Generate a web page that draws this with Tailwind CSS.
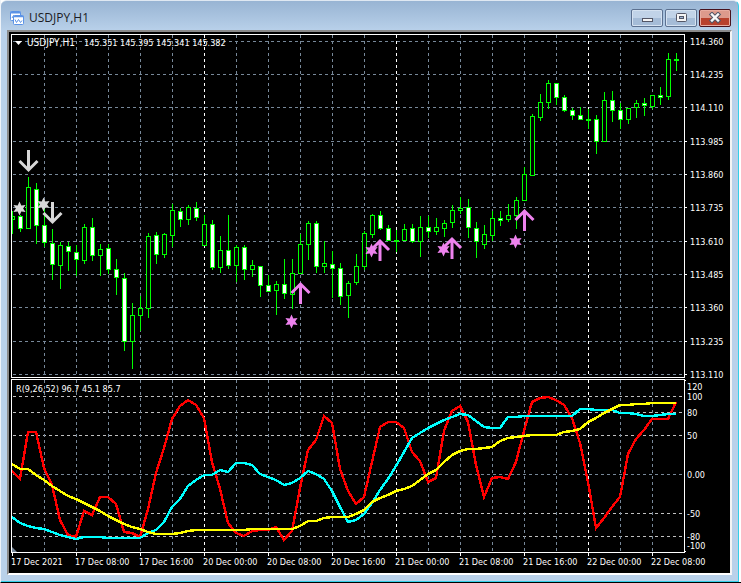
<!DOCTYPE html>
<html lang="en">
<head>
<meta charset="utf-8">
<title>USDJPY,H1</title>
<script src="https://cdn.jsdelivr.net/npm/@tailwindcss/browser@4"></script>
</head>
<body class="bg-white font-['Open_Sans',sans-serif]">
<div class="w-full border-l border-l-[#eef3f9] border-b border-b-black pr-[2px]">
  <main class="rounded-t-md border-t border-t-[#dfe8f2] border-r border-r-[#35cfe8] border-b border-b-[#35cfe8] bg-[#b9d1ea] bg-linear-to-b from-[#98b4d3] to-[#b9d1ea] to-[30px] px-[6px] pb-[6px]">
    <header class="flex h-[29px] items-center gap-1 pl-[3px] pr-px pt-[5px]">
      <svg class="size-[14px] shrink-0" viewBox="0 0 14 14" aria-hidden="true">
        <rect x="0.5" y="0.5" width="10" height="9" rx="1" fill="#fff" stroke="#5b93e6"/>
        <path d="M0.5 1.500h10" stroke="#5b93e6" stroke-width="2"/>
        <path d="M2 7l1.500-2.500L5 6" fill="none" stroke="#5b93e6"/>
        <rect x="3.500" y="4.500" width="10" height="9" rx="1" fill="#fff" stroke="#5b93e6"/>
        <path d="M3.500 5.500h10" stroke="#5b93e6" stroke-width="1.500"/>
        <path d="M5 8.500L6.500 11.500L8.500 8.500L10.500 11.500L12 9.500" fill="none" stroke="#5b93e6"/>
      </svg>
      <h1 class="ml-px flex-1 text-[12px] leading-4 text-[#1c1c24]">USDJPY,H1</h1>
      <div class="flex gap-[2px]">
        <button type="button" aria-label="Minimize" class="flex h-[18px] w-8 items-center justify-center rounded-[2px] border border-[#5c7190] bg-linear-to-b from-[#c1d3e8] from-50% to-[#a5bcd7] to-50% shadow-[inset_0_0_0_1px_#d5e2f1]">
          <svg class="h-3 w-[14px]" viewBox="0 0 14 12"><rect x="2.500" y="6.500" width="10" height="3" fill="#f5f5f5" stroke="#535666"/></svg>
        </button>
        <button type="button" aria-label="Maximize" class="flex h-[18px] w-8 items-center justify-center rounded-[2px] border border-[#5c7190] bg-linear-to-b from-[#c1d3e8] from-50% to-[#a5bcd7] to-50% shadow-[inset_0_0_0_1px_#d5e2f1]">
          <svg class="h-3 w-[14px]" viewBox="0 0 14 12"><rect x="2.500" y="1.500" width="10" height="8" rx="1" fill="#f5f5f5" stroke="#535666"/><rect x="5.500" y="4.500" width="4" height="2" fill="#9db6d4" stroke="#535666"/></svg>
        </button>
        <button type="button" aria-label="Close" class="flex h-[18px] w-8 items-center justify-center rounded-[2px] border border-[#47121d] bg-linear-to-b from-[#dd9a8c] from-50% to-[#b8412c] to-50% shadow-[inset_0_0_0_1px_#e8aca0]">
          <svg class="h-3 w-[14px]" viewBox="0 0 14 12"><path d="M4 2.500L10 8.500M10 2.500L4 8.500" stroke="#535666" stroke-width="4.500" stroke-linecap="square"/><path d="M4 2.500L10 8.500M10 2.500L4 8.500" stroke="#f8f8f8" stroke-width="2.400" stroke-linecap="square"/></svg>
        </button>
      </div>
    </header>
    <div class="border-2 border-b-white border-l-[#8a8a8a] border-r-[#f4f4f4] border-t-[#8a8a8a] bg-black">
      <svg id="chart" class="block h-auto w-full font-['DejaVu_Sans_Condensed','DejaVu_Sans',sans-serif] text-[9px]" viewBox="9 32 721 541" role="img" aria-label="USDJPY hourly candlestick chart with R indicator">
        <g id="grid" shape-rendering="crispEdges" fill="none"></g>
        <g id="candles" shape-rendering="crispEdges"></g>
        <g id="lines" fill="none" stroke-width="2.4" shape-rendering="crispEdges"></g>
        <g id="marks"></g>
        <g shape-rendering="crispEdges" fill="none" stroke="#fff">
          <path d="M11.500 34.500H684.500V377.500H11.500Z"/>
          <path d="M11.500 379.500H684.500V552.500H11.500Z"/>
          <path id="ticks"/>
        </g>
        <path d="M12 547v5h5z" fill="#778899"/>
        <path d="M15 41h7l-3.500 4z" fill="#fff"/>
        <g id="labels" fill="#fff">
          <text x="27" y="46" class="text-[10px]">USDJPY,H1</text>
          <text x="84" y="46">145.351 145.395 145.341 145.382</text>
          <text x="16" y="392">R(9,26,52) 96.7 45.1 85.7</text>
        </g>
      </svg>
    </div>
  </main>
</div>
<script>
const NS = 'http://www.w3.org/2000/svg';
const $ = id => document.getElementById(id);
function add(parent, name, attrs, text) {
  const e = document.createElementNS(NS, name);
  for (const k in attrs) e.setAttribute(k, attrs[k]);
  if (text) e.textContent = text;
  $(parent).appendChild(e);
}
const X0 = 12, STEP = 8;

// Grid
const prices = [[41,'114.360'],[74,'114.235'],[107,'114.110'],[141,'113.985'],[174,'113.860'],[207,'113.735'],[241,'113.610'],[274,'113.485'],[307,'113.360'],[341,'113.235'],[374,'113.110']];
const levels = [[396,'100'],[412,'80'],[435,'50'],[474,'0.00'],[513,'-50'],[536,'-80']];
let ticks = '';
for (const [y, t] of prices) {
  add('grid', 'path', {d: `M13 ${y + .5}H684`, stroke: '#778899', 'stroke-dasharray': '3 3'});
  add('labels', 'text', {x: 690, y: y + 4}, t);
  ticks += `M684 ${y + .5}h3`;
}
for (const [y, t] of levels) {
  add('grid', 'path', {d: `M13 ${y + .5}H684`, stroke: y === 474 ? '#778899' : '#c0c0c0', 'stroke-dasharray': '3 3'});
  add('labels', 'text', {x: 687, y: y + 4}, t);
}
add('labels', 'text', {x: 687, y: 390}, '120');
add('labels', 'text', {x: 687, y: 549}, '-100');
for (let x = 44; x < 684; x += 32) {
  const day = [204, 396, 588].includes(x);
  add('grid', 'path', {d: `M${x + .5} 35V377M${x + .5} 380V552`, stroke: day ? '#fff' : '#778899', 'stroke-dasharray': '3 3'});
}
['17 Dec 2021','17 Dec 08:00','17 Dec 16:00','20 Dec 00:00','20 Dec 08:00','20 Dec 16:00','21 Dec 00:00','21 Dec 08:00','21 Dec 16:00','22 Dec 00:00','22 Dec 08:00'].forEach((t, i) => {
  add('labels', 'text', {x: 11 + 64 * i, y: 565}, t);
  ticks += `M${12.5 + 64 * i} 553v3`;
});
$('ticks').setAttribute('d', ticks + 'M684 380.500h2M684 551.500h2');

// Candles: high, body top, body bottom, low, falling
const candles = [[211,216,219,233,0],[215,216,228,231,1],[177,187,228,228,0],[183,189,225,243,1],[208,225,242,246,1],[229,243,264,279,1],[242,245,265,288,0],[242,246,251,270,1],[245,252,259,275,1],[224,227,260,263,0],[218,227,255,260,1],[244,249,255,275,0],[244,248,269,273,1],[259,269,277,294,1],[273,278,341,350,1],[303,315,341,368,0],[296,308,315,330,0],[233,236,308,317,0],[232,235,254,263,1],[233,234,254,257,0],[204,210,235,246,0],[208,211,219,226,1],[205,207,219,224,0],[202,208,217,220,1],[215,224,245,245,0],[220,224,267,269,1],[236,250,267,272,0],[215,250,265,268,1],[245,247,265,281,0],[245,247,269,279,1],[260,265,269,276,0],[266,266,285,296,1],[275,285,291,291,1],[281,284,290,314,0],[259,284,293,298,1],[259,273,294,308,0],[234,244,273,273,0],[221,223,244,259,0],[221,223,266,272,1],[241,263,266,272,0],[251,264,268,297,1],[263,268,296,304,1],[281,283,295,317,0],[254,266,282,284,0],[231,233,266,269,0],[214,215,234,237,0],[211,215,228,229,1],[225,228,240,240,1],[230,240,241,251,0],[224,229,240,240,0],[224,228,241,242,1],[216,227,241,256,0],[216,227,231,237,1],[218,227,231,234,0],[220,223,228,236,0],[205,210,222,227,0],[197,208,210,213,0],[199,207,227,237,1],[222,228,241,257,1],[225,234,244,248,0],[211,218,235,240,0],[211,218,220,225,1],[204,215,219,221,0],[197,200,215,228,0],[167,174,200,200,0],[114,116,175,175,0],[94,102,117,120,0],[80,83,102,108,0],[83,83,97,104,1],[95,97,110,111,1],[108,110,115,119,1],[107,115,119,119,1],[109,119,120,128,0],[115,119,141,153,1],[92,100,141,141,0],[91,100,110,121,1],[103,110,119,128,1],[108,108,119,123,0],[100,103,107,117,0],[98,103,105,115,1],[95,95,106,108,0],[87,95,97,104,1],[53,59,96,99,0],[53,59,60,70,0]];
candles.forEach(([h, t, b, l, down], i) => {
  const x = X0 + STEP * i, left = i ? x - 2 : x, w = i ? 5 : 3;
  let wick = '';
  if (t > h) wick += `M${x + .5} ${h}V${t}`;
  if (l > b) wick += `M${x + .5} ${b + 1}V${l + 1}`;
  if (wick) add('candles', 'path', {d: wick, stroke: '#00ff00'});
  if (b - t < 2) add('candles', 'rect', {x: left, y: t, width: w, height: b - t + 1, fill: '#00ff00'});
  else add('candles', 'rect', {x: left + .5, y: t + .5, width: w - 1, height: b - t, fill: down ? '#fff' : '#000', stroke: '#00ff00'});
});

// Indicator series
const series = {
  '#ff0000': [471,479,432,432,468,485,520,535,537,511,515,497,497,504,532,533,537,509,473,448,419,406,400,405,418,462,489,523,533,536,531,530,530,527,540,531,488,450,440,416,423,469,491,504,497,462,427,422,422,428,452,461,482,478,431,411,406,422,465,497,478,477,479,462,431,402,398,397,400,405,418,443,482,528,518,507,497,454,439,430,419,419,419,402],
  '#00ffff': [517,523,526,528,529,532,535,537,539,537,537,537,538,538,538,538,538,533,530,522,507,499,486,480,475,475,470,472,463,463,465,474,477,480,485,483,478,471,474,479,491,507,522,520,514,503,490,479,466,452,438,433,428,424,420,417,414,415,421,427,428,428,417,417,416,416,416,416,416,416,416,409,409,410,410,410,413,413,414,416,416,415,414,414],
  '#ffff00': [464,469,469,475,480,486,491,496,499,503,507,511,516,520,524,527,529,532,534,534,534,533,531,530,530,530,530,530,530,530,529,529,529,529,529,529,526,521,521,518,517,517,517,514,510,502,498,495,491,489,486,480,474,470,462,455,451,449,449,448,447,441,438,437,436,435,435,435,435,432,431,429,422,418,413,409,405,405,404,404,403,403,403,403]
};
for (const color in series) {
  add('lines', 'polyline', {points: series[color].map((y, i) => `${X0 + STEP * i},${y}`).join(' '), stroke: color});
}

// Signal arrows (x, tip y) and stars (x, y)
const silver = '#d8d8d8', violet = '#ee82ee';
function arrow(x, y, up) {
  const s = up ? 1 : -1;
  add('marks', 'path', {d: `M${x} ${y + 2 * s}V${y + 22 * s}M${x - 9} ${y + 11 * s}L${x} ${y + 2 * s}L${x + 9} ${y + 11 * s}`, fill: 'none', stroke: up ? violet : silver, 'stroke-width': 3});
}
function star(x, y, c) {
  let p = [];
  for (let k = 0; k < 12; k++) {
    const r = k % 2 ? 3.6 : 7, a = k * Math.PI / 6;
    p.push(`${(x + r * Math.sin(a)).toFixed(1)},${(y - r * Math.cos(a)).toFixed(1)}`);
  }
  add('marks', 'polygon', {points: p.join(' '), fill: c});
}
star(19.5, 208.5, silver); star(43.5, 204.5, silver);
arrow(28.5, 172, 0); arrow(52.5, 224, 0);
star(291.5, 321.5, violet); star(371.5, 250.5, violet); star(443.5, 249.5, violet); star(515.5, 241.5, violet);
arrow(300.5, 282, 1); arrow(380, 239, 1); arrow(452, 237, 1); arrow(524.5, 209, 1);
</script>
</body>
</html>
